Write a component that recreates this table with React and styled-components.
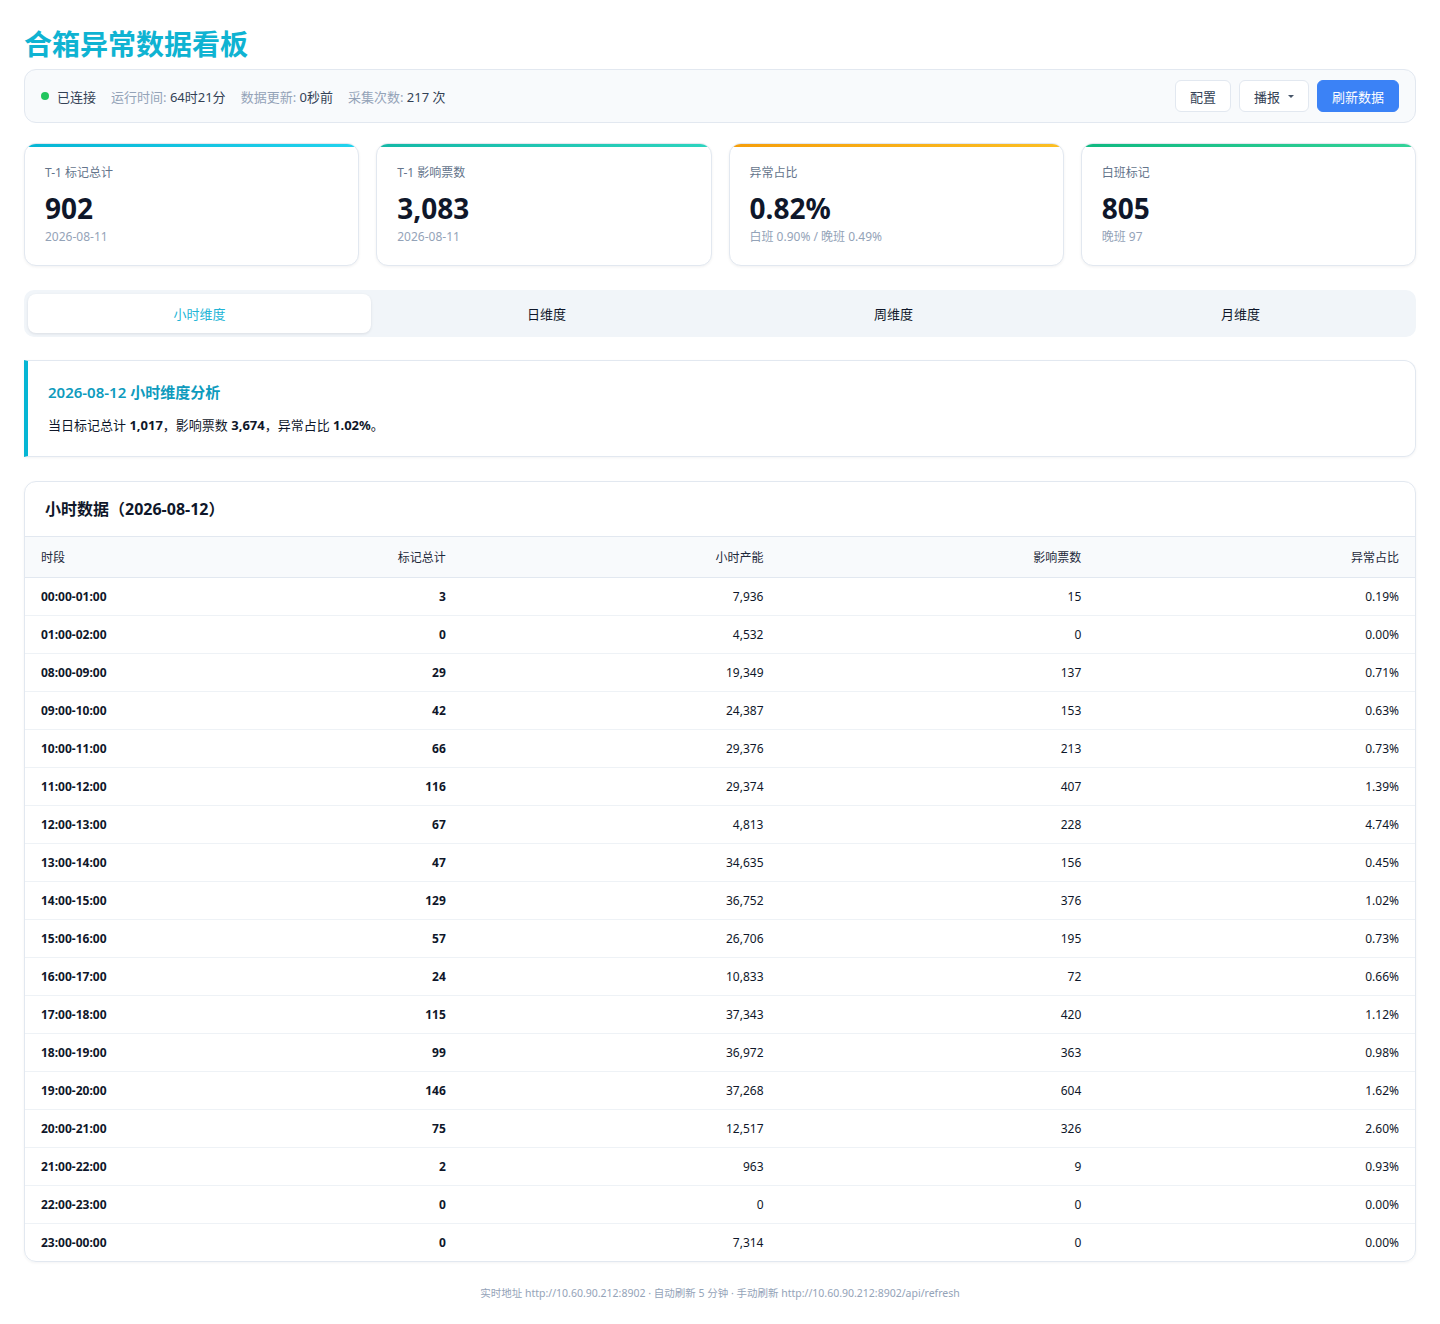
import React from "react";
import styled, { createGlobalStyle } from "styled-components";

const Global = createGlobalStyle`
  * { box-sizing: border-box; }
  body {
    margin: 0;
    background: #ffffff;
    font-family: "Noto Sans", "Noto Sans CJK SC", sans-serif;
    color: #0f172a;
  }
`;

const Page = styled.div`
  padding: 26px 24px 24px;
`;

const Title = styled.h1`
  margin: 0 0 7px;
  font-size: 28px;
  line-height: 36px;
  font-weight: 700;
  color: #0fb3d2;
  letter-spacing: 0;
`;

const StatusBar = styled.div`
  display: flex;
  align-items: center;
  justify-content: space-between;
  height: 54px;
  padding: 0 16px;
  background: #f8fafc;
  border: 1px solid #e2e8f0;
  border-radius: 12px;
`;

const StatusLeft = styled.div`
  display: flex;
  align-items: center;
  gap: 15px;
  font-size: 13px;
  color: #334155;
`;

const Dot = styled.span`
  display: inline-block;
  width: 8px;
  height: 8px;
  border-radius: 50%;
  background: #22c55e;
  margin-right: 8px;
`;

const StatusItem = styled.span`
  display: inline-flex;
  align-items: center;
  color: #334155;
`;

const Muted = styled.span`
  color: #94a3b8;
`;

const Actions = styled.div`
  display: flex;
  gap: 8px;
`;

const Btn = styled.button`
  height: 32px;
  padding: 0 14px;
  border-radius: 6px;
  font-family: inherit;
  font-size: 13px;
  display: inline-flex;
  align-items: center;
  gap: 6px;
  cursor: pointer;
  border: 1px solid ${(p) => (p.$primary ? "#3b82f6" : "#e2e8f0")};
  background: ${(p) => (p.$primary ? "#3b82f6" : "#ffffff")};
  color: ${(p) => (p.$primary ? "#ffffff" : "#334155")};
`;

const Caret = styled.span`
  width: 0;
  height: 0;
  border-left: 3px solid transparent;
  border-right: 3px solid transparent;
  border-top: 3px solid #475569;
  margin-left: 2px;
`;

const Cards = styled.div`
  display: grid;
  grid-template-columns: repeat(4, 1fr);
  gap: 17px;
  margin-top: 20px;
`;

const Card = styled.div`
  position: relative;
  background: #fff;
  border: 1px solid #e2e8f0;
  border-radius: 12px;
  padding: 20px 20px 20px;
  overflow: hidden;
  box-shadow: 0 1px 3px rgba(15, 23, 42, 0.06);
  &::before {
    content: "";
    position: absolute;
    left: 0;
    right: 0;
    top: 0;
    height: 3px;
    background: ${(p) => p.$accent};
  }
`;

const CardLabel = styled.div`
  font-size: 12px;
  line-height: 18px;
  color: #64748b;
`;

const CardValue = styled.div`
  margin-top: 8px;
  font-size: 28px;
  line-height: 36px;
  font-weight: 700;
  color: #0f172a;
`;

const CardSub = styled.div`
  margin-top: 3px;
  font-size: 12px;
  line-height: 16px;
  color: #94a3b8;
`;

const Tabs = styled.div`
  display: grid;
  grid-template-columns: repeat(4, 1fr);
  gap: 4px;
  padding: 4px;
  margin-top: 24px;
  background: #f1f5f9;
  border-radius: 10px;
`;

const Tab = styled.div`
  height: 39px;
  display: flex;
  align-items: center;
  justify-content: center;
  font-size: 13px;
  border-radius: 8px;
  color: ${(p) => (p.$active ? "#22b5d6" : "#0f172a")};
  background: ${(p) => (p.$active ? "#ffffff" : "transparent")};
  box-shadow: ${(p) => (p.$active ? "0 1px 3px rgba(15,23,42,0.1)" : "none")};
`;

const Summary = styled.div`
  margin-top: 23px;
  border: 1px solid #e2e8f0;
  border-left: 4px solid #06b6d4;
  border-radius: 0 12px 12px 0;
  padding: 20px 20px;
  box-shadow: 0 1px 3px rgba(15, 23, 42, 0.05);
`;

const SummaryTitle = styled.div`
  font-size: 15px;
  line-height: 22px;
  font-weight: 600;
  color: #0e9bbd;
`;

const SummaryText = styled.div`
  margin-top: 11px;
  font-size: 13px;
  line-height: 22px;
  color: #0f172a;
  b { font-weight: 700; }
`;

const TableCard = styled.div`
  margin-top: 24px;
  border: 1px solid #e2e8f0;
  border-radius: 12px;
  overflow: hidden;
  box-shadow: 0 1px 3px rgba(15, 23, 42, 0.05);
`;

const TableHead = styled.div`
  padding: 16px 20px 16px;
  font-size: 16px;
  line-height: 22px;
  font-weight: 700;
  color: #0f172a;
  border-bottom: 1px solid #e2e8f0;
`;

const Table = styled.table`
  width: 100%;
  border-collapse: collapse;
  font-size: 12px;
`;

const Th = styled.th`
  height: 40px;
  padding: 0 16px;
  background: #f8fafc;
  font-weight: 400;
  color: #1e293b;
  text-align: ${(p) => (p.$left ? "left" : "right")};
  border-bottom: 1px solid #e2e8f0;
`;

const Td = styled.td`
  height: 38px;
  padding: 0 16px;
  color: #0f172a;
  font-weight: ${(p) => (p.$bold ? 700 : 400)};
  text-align: ${(p) => (p.$left ? "left" : "right")};
  border-bottom: 1px solid #eef2f6;
  tr:last-child & { border-bottom: none; }
`;

const Footer = styled.div`
  margin-top: 24px;
  text-align: center;
  font-size: 10.5px;
  line-height: 14px;
  color: #94a3b8;
`;

const cards = [
  { label: "T-1 标记总计", value: "902", sub: "2026-08-11", accent: "linear-gradient(90deg,#06b6d4,#22d3ee)" },
  { label: "T-1 影响票数", value: "3,083", sub: "2026-08-11", accent: "linear-gradient(90deg,#14b8a6,#2dd4bf)" },
  { label: "异常占比", value: "0.82%", sub: "白班 0.90% / 晚班 0.49%", accent: "linear-gradient(90deg,#f59e0b,#fbbf24)" },
  { label: "白班标记", value: "805", sub: "晚班 97", accent: "linear-gradient(90deg,#10b981,#34d399)" },
];

const rows = [
  ["00:00-01:00", "3", "7,936", "15", "0.19%"],
  ["01:00-02:00", "0", "4,532", "0", "0.00%"],
  ["08:00-09:00", "29", "19,349", "137", "0.71%"],
  ["09:00-10:00", "42", "24,387", "153", "0.63%"],
  ["10:00-11:00", "66", "29,376", "213", "0.73%"],
  ["11:00-12:00", "116", "29,374", "407", "1.39%"],
  ["12:00-13:00", "67", "4,813", "228", "4.74%"],
  ["13:00-14:00", "47", "34,635", "156", "0.45%"],
  ["14:00-15:00", "129", "36,752", "376", "1.02%"],
  ["15:00-16:00", "57", "26,706", "195", "0.73%"],
  ["16:00-17:00", "24", "10,833", "72", "0.66%"],
  ["17:00-18:00", "115", "37,343", "420", "1.12%"],
  ["18:00-19:00", "99", "36,972", "363", "0.98%"],
  ["19:00-20:00", "146", "37,268", "604", "1.62%"],
  ["20:00-21:00", "75", "12,517", "326", "2.60%"],
  ["21:00-22:00", "2", "963", "9", "0.93%"],
  ["22:00-23:00", "0", "0", "0", "0.00%"],
  ["23:00-00:00", "0", "7,314", "0", "0.00%"],
];

export default function App() {
  return (
    <Page>
      <Global />
      <Title>合箱异常数据看板</Title>
      <StatusBar>
        <StatusLeft>
          <StatusItem><Dot />已连接</StatusItem>
          <StatusItem><Muted>运行时间:</Muted>&nbsp;64时21分</StatusItem>
          <StatusItem><Muted>数据更新:</Muted>&nbsp;0秒前</StatusItem>
          <StatusItem><Muted>采集次数:</Muted>&nbsp;217 次</StatusItem>
        </StatusLeft>
        <Actions>
          <Btn>配置</Btn>
          <Btn>播报<Caret /></Btn>
          <Btn $primary>刷新数据</Btn>
        </Actions>
      </StatusBar>

      <Cards>
        {cards.map((c) => (
          <Card key={c.label} $accent={c.accent}>
            <CardLabel>{c.label}</CardLabel>
            <CardValue>{c.value}</CardValue>
            <CardSub>{c.sub}</CardSub>
          </Card>
        ))}
      </Cards>

      <Tabs>
        <Tab $active>小时维度</Tab>
        <Tab>日维度</Tab>
        <Tab>周维度</Tab>
        <Tab>月维度</Tab>
      </Tabs>

      <Summary>
        <SummaryTitle>2026-08-12 小时维度分析</SummaryTitle>
        <SummaryText>
          当日标记总计 <b>1,017</b>，影响票数 <b>3,674</b>，异常占比 <b>1.02%</b>。
        </SummaryText>
      </Summary>

      <TableCard>
        <TableHead>小时数据（2026-08-12）</TableHead>
        <Table>
          <colgroup>
            <col style={{ width: "119px" }} />
            <col />
            <col />
            <col />
            <col />
          </colgroup>
          <thead>
            <tr>
              <Th $left>时段</Th>
              <Th>标记总计</Th>
              <Th>小时产能</Th>
              <Th>影响票数</Th>
              <Th>异常占比</Th>
            </tr>
          </thead>
          <tbody>
            {rows.map((r) => (
              <tr key={r[0]}>
                <Td $left $bold>{r[0]}</Td>
                <Td $bold>{r[1]}</Td>
                <Td>{r[2]}</Td>
                <Td>{r[3]}</Td>
                <Td>{r[4]}</Td>
              </tr>
            ))}
          </tbody>
        </Table>
      </TableCard>

      <Footer>
        实时地址 http://10.60.90.212:8902 · 自动刷新 5 分钟 · 手动刷新 http://10.60.90.212:8902/api/refresh
      </Footer>
    </Page>
  );
}
